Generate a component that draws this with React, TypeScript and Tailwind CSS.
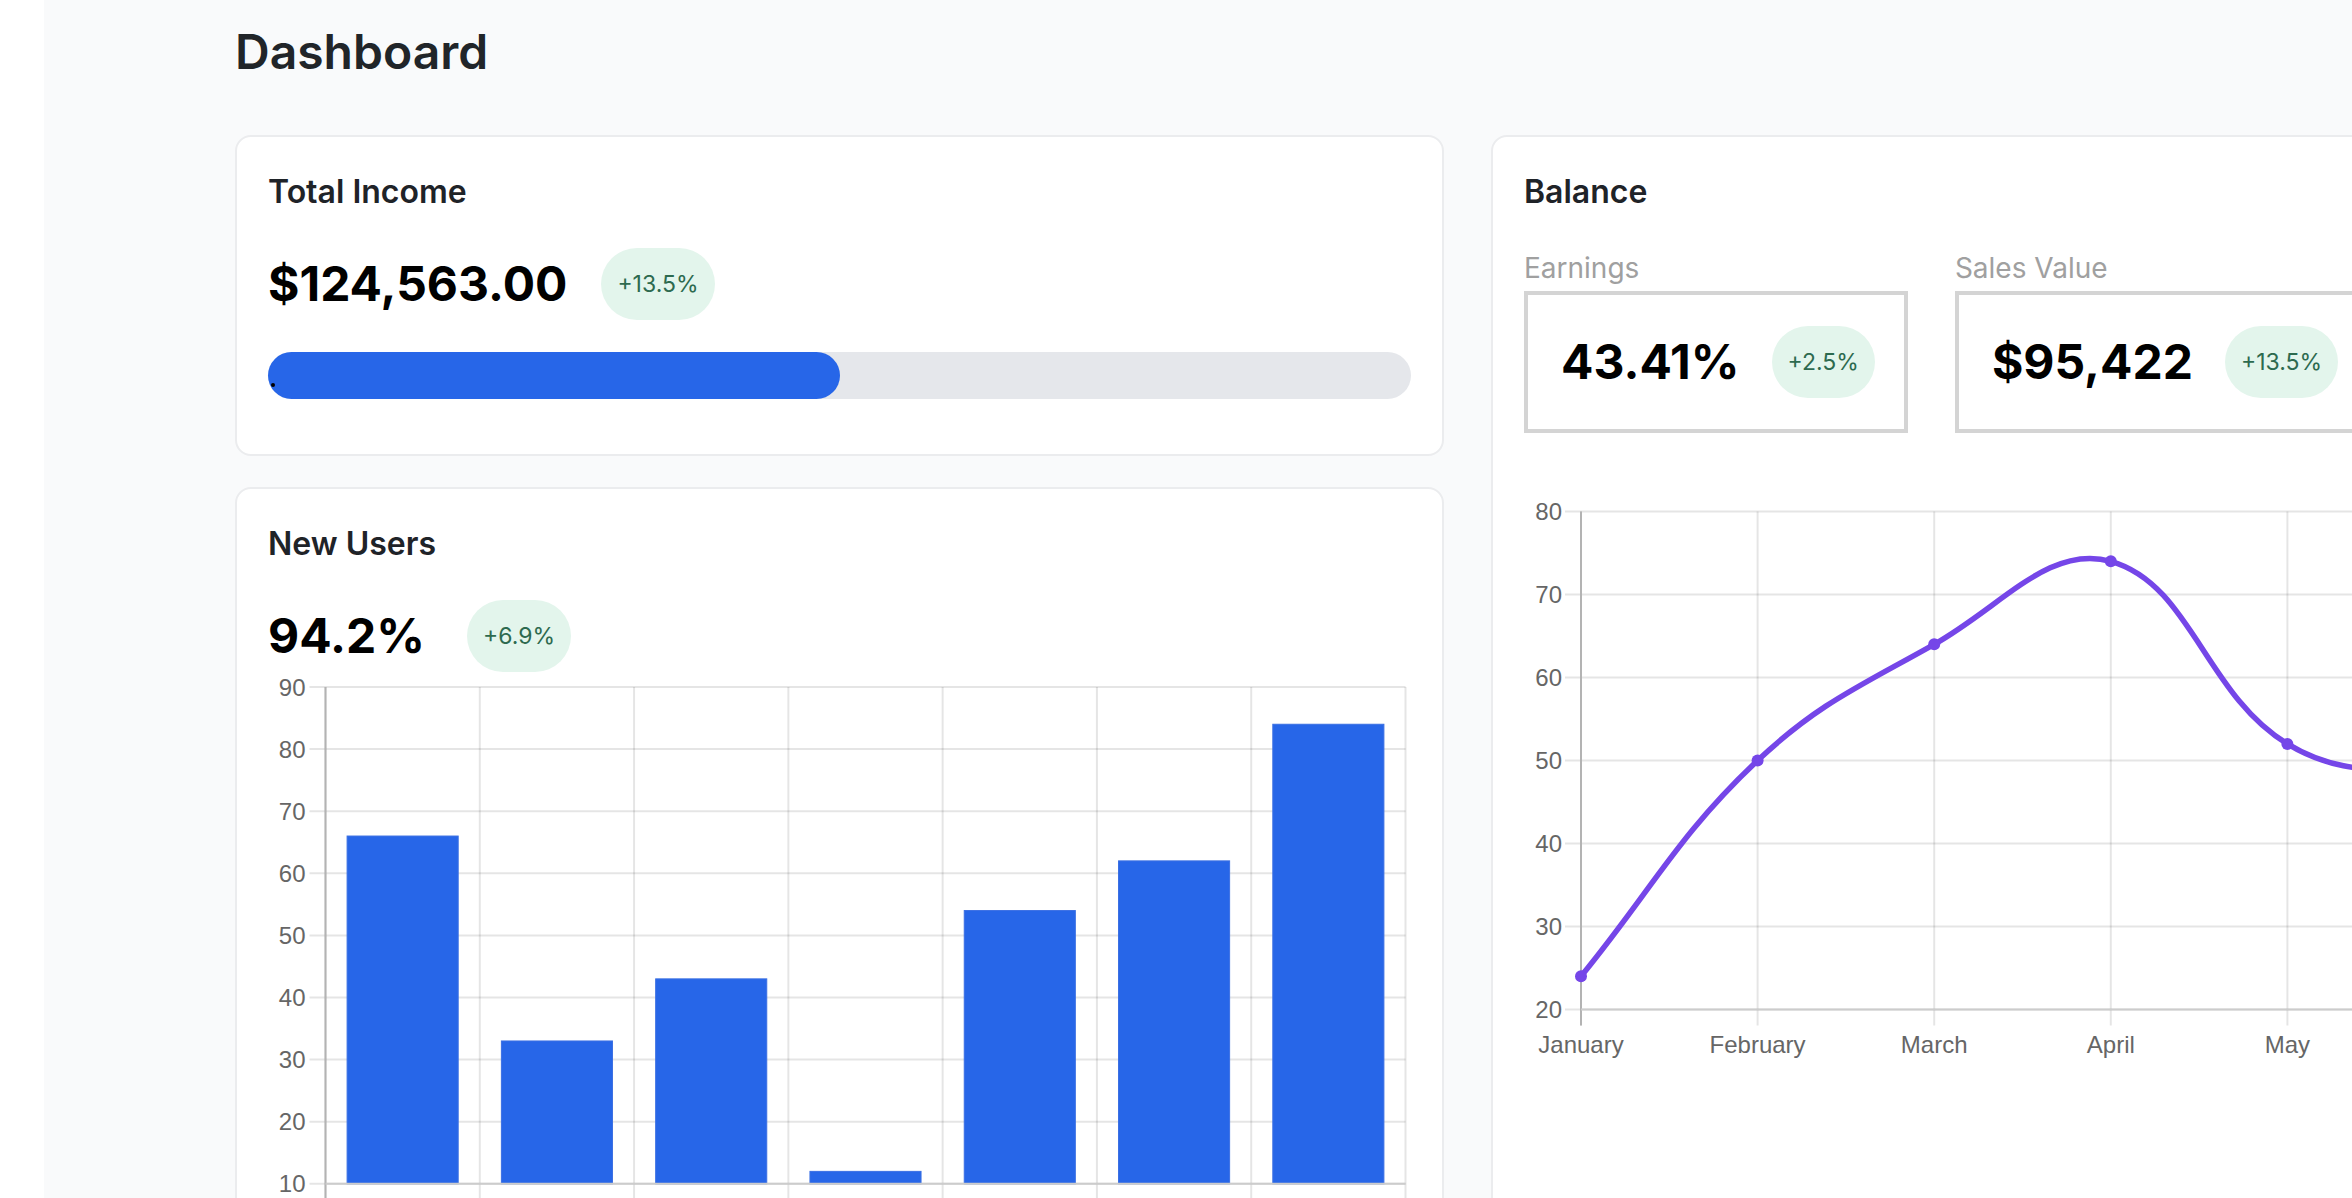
import type { ReactNode } from "react";

const months = ["January", "February", "March", "April", "May", "June", "July"];
const newUsers = [66, 33, 43, 12, 54, 62, 84];
const balance = [24, 50, 64, 74, 52, 48, 45];

const GRID = "rgba(0,0,0,0.1)";
const LABEL = "#666666";
const CHART_FONT = "'Liberation Sans', Arial, sans-serif";

function Badge({ value }: { value: string }) {
  return (
    <span className="flex h-[72px] items-center rounded-full bg-[#e3f5ec] px-[16px] text-[23px] leading-none text-[#2d6a4f]">
      {value}
    </span>
  );
}

function Card({ title, children, className }: { title: string; children: ReactNode; className?: string }) {
  return (
    <div className={"rounded-[16px] border-2 border-[#ebecee] bg-white px-[31px] pt-[31px] " + (className ?? "")}>
      <h2 className="text-[32px] leading-[48px] font-semibold text-[#1f2328]">{title}</h2>
      {children}
    </div>
  );
}

function BarChart() {
  const W = 1143;
  const H = 540;
  const ax = 57.5;
  const right = 1137.5;
  const top = 15;
  const step = 62.1;
  const bottom = top + 8 * step;
  const cw = (right - ax) / 7;
  const y = (v: number) => top + ((90 - v) / 10) * step;
  const ticks = [90, 80, 70, 60, 50, 40, 30, 20, 10];

  return (
    <svg width={W} height={H} className="block">
      {ticks.map((t) => (
        <g key={t}>
          <line x1={ax - 16} x2={right} y1={y(t)} y2={y(t)} stroke={GRID} strokeWidth={2} />
          <text x={ax - 20} y={y(t)} textAnchor="end" dominantBaseline="central" fontSize={24} fill={LABEL} fontFamily={CHART_FONT}>
            {t}
          </text>
        </g>
      ))}
      {Array.from({ length: 8 }).map((_, i) => (
        <line key={i} x1={ax + i * cw} x2={ax + i * cw} y1={top} y2={bottom + 16} stroke={GRID} strokeWidth={2} />
      ))}
      {newUsers.map((v, i) => {
        const bw = cw * 0.72;
        const x = ax + (i + 0.5) * cw - bw / 2;
        return <rect key={i} x={x} y={y(v)} width={bw} height={bottom - y(v)} fill="#2766e8" stroke="#3a6fe3" strokeWidth={1} />;
      })}
      <line x1={ax} x2={ax} y1={top} y2={bottom + 16} stroke="#b3b3b3" strokeWidth={2} />
      <line x1={ax} x2={right} y1={bottom} y2={bottom} stroke="#cccccc" strokeWidth={2} />
    </svg>
  );
}

type Pt = { x: number; y: number };

// same spline chart.js uses for tension 0.4
function controls(p0: Pt, p1: Pt, p2: Pt, t: number) {
  const d01 = Math.hypot(p1.x - p0.x, p1.y - p0.y);
  const d12 = Math.hypot(p2.x - p1.x, p2.y - p1.y);
  let s01 = d01 / (d01 + d12);
  let s12 = d12 / (d01 + d12);
  if (isNaN(s01)) s01 = 0;
  if (isNaN(s12)) s12 = 0;
  const fa = t * s01;
  const fb = t * s12;
  return {
    prev: { x: p1.x - fa * (p2.x - p0.x), y: p1.y - fa * (p2.y - p0.y) },
    next: { x: p1.x + fb * (p2.x - p0.x), y: p1.y + fb * (p2.y - p0.y) },
  };
}

function LineChart() {
  const W = 1143;
  const H = 600;
  const ax = 57;
  const right = 1137;
  const top = 41.5;
  const step = 83;
  const xs = 176.6;
  const bottom = top + 6 * step;
  const y = (v: number) => top + ((80 - v) / 10) * step;
  const ticks = [80, 70, 60, 50, 40, 30, 20];

  const pts = balance.map((v, i) => ({ x: ax + i * xs, y: y(v) }));
  const cps = pts.map((p, i) => controls(pts[i - 1] ?? p, p, pts[i + 1] ?? p, 0.4));
  let d = `M ${pts[0].x} ${pts[0].y}`;
  for (let i = 1; i < pts.length; i++) {
    const a = cps[i - 1].next;
    const b = cps[i].prev;
    d += ` C ${a.x} ${a.y} ${b.x} ${b.y} ${pts[i].x} ${pts[i].y}`;
  }

  return (
    <svg width={W} height={H} className="block">
      {ticks.map((t) => (
        <g key={t}>
          <line x1={ax - 16} x2={right} y1={y(t)} y2={y(t)} stroke={GRID} strokeWidth={2} />
          <text x={ax - 19} y={y(t)} textAnchor="end" dominantBaseline="central" fontSize={24} fill={LABEL} fontFamily={CHART_FONT}>
            {t}
          </text>
        </g>
      ))}
      {months.map((m, i) => (
        <g key={m}>
          <line x1={ax + i * xs} x2={ax + i * xs} y1={top} y2={bottom + 16} stroke={GRID} strokeWidth={2} />
          <text x={ax + i * xs} y={bottom + 35} textAnchor="middle" dominantBaseline="central" fontSize={24} fill={LABEL} fontFamily={CHART_FONT}>
            {m}
          </text>
        </g>
      ))}
      <line x1={ax} x2={ax} y1={top} y2={bottom + 16} stroke="#b3b3b3" strokeWidth={2} />
      <line x1={ax} x2={right} y1={bottom} y2={bottom} stroke="#cccccc" strokeWidth={2} />
      <path d={d} fill="none" stroke="#7546e8" strokeWidth={5.5} />
      {pts.map((p, i) => (
        <circle key={i} cx={p.x} cy={p.y} r={6} fill="#7546e8" />
      ))}
    </svg>
  );
}

function StatBox({ label, value, change }: { label: string; value: string; change: string }) {
  return (
    <div>
      <p className="text-[28px] leading-[40px] text-[#a0a0a0]">{label}</p>
      <div className="mt-[3px] flex items-center gap-[32px] border-4 border-[#d4d4d4] py-[31px] pl-[33px] pr-[29px]">
        <span className="text-[48px] leading-[64px] font-bold text-black">{value}</span>
        <Badge value={change} />
      </div>
    </div>
  );
}

export default function App() {
  return (
    <div className="h-[1198px] w-[2352px] overflow-hidden bg-[#f9fafb] font-['Inter',sans-serif]">
      <div className="flex h-full w-max">
        <aside className="w-[44px] shrink-0 bg-white" />
        <main className="pl-[191px] pt-[20px]">
          <h1 className="mb-[51px] text-[48px] leading-[64px] font-semibold text-[#212529]">Dashboard</h1>
          <div className="flex gap-[47px]">
            <div className="flex w-[1209px] shrink-0 flex-col gap-[31px]">
              <Card title="Total Income" className="pb-[55px]">
                <div className="mt-[32px] flex items-center gap-[34px]">
                  <span className="text-[48px] leading-[64px] font-bold text-black">$124,563.00</span>
                  <Badge value="+13.5%" />
                </div>
                <div className="mt-[32px] h-[47px] w-full rounded-full bg-[#e5e7eb]">
                  <div className="relative h-full w-1/2 rounded-full bg-[#2766e8]">
                    <span className="absolute left-[3px] top-[31px] h-[4px] w-[4px] rounded-full bg-black" />
                  </div>
                </div>
              </Card>
              <Card title="New Users">
                <div className="mt-[32px] flex items-center gap-[42px]">
                  <span className="text-[48px] leading-[64px] font-bold text-black">94.2%</span>
                  <Badge value="+6.9%" />
                </div>
                <BarChart />
              </Card>
            </div>
            <Card title="Balance" className="w-[1209px] shrink-0">
              <div className="mt-[32px] flex gap-[47px]">
                <StatBox label="Earnings" value="43.41%" change="+2.5%" />
                <StatBox label="Sales Value" value="$95,422" change="+13.5%" />
              </div>
              <div className="mt-[37px]">
                <LineChart />
              </div>
            </Card>
          </div>
        </main>
      </div>
    </div>
  );
}
